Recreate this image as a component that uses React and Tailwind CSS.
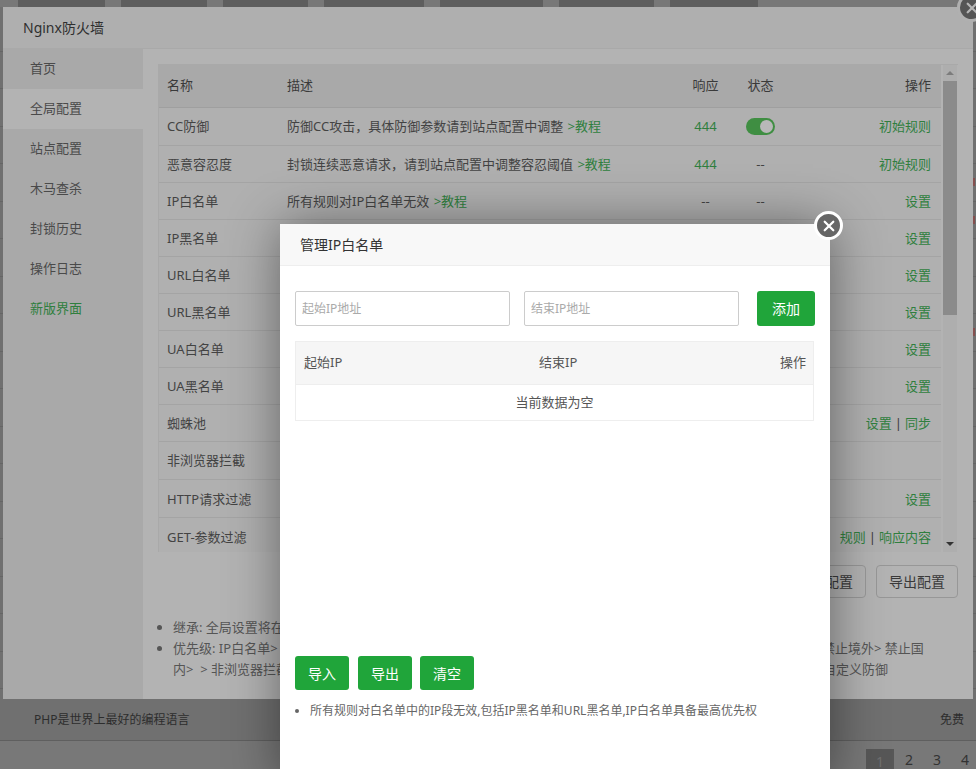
import React from "react";

const menu = ["首页", "全局配置", "站点配置", "木马查杀", "封锁历史", "操作日志", "新版界面"];

const rows = [
  { name: "CC防御", desc: "防御CC攻击，具体防御参数请到站点配置中调整", link: true, code: "444", toggle: true, ops: ["初始规则"], h: "h-[38px]" },
  { name: "恶意容忍度", desc: "封锁连续恶意请求，请到站点配置中调整容忍阈值", link: true, code: "444", state: "--", ops: ["初始规则"], h: "h-[37px] pt-[2px]" },
  { name: "IP白名单", desc: "所有规则对IP白名单无效", link: true, code: "--", state: "--", ops: ["设置"], h: "h-[37px] pt-[2px]" },
  { name: "IP黑名单", ops: ["设置"], h: "h-[37px] pt-[2px]" },
  { name: "URL白名单", ops: ["设置"], h: "h-[37px] pt-[2px]" },
  { name: "URL黑名单", ops: ["设置"], h: "h-[37px] pt-[2px]" },
  { name: "UA白名单", ops: ["设置"], h: "h-[37px] pt-[2px]" },
  { name: "UA黑名单", ops: ["设置"], h: "h-[37px] pt-[2px]" },
  { name: "蜘蛛池", ops: ["设置", "同步"], h: "h-[37px] pt-[2px]" },
  { name: "非浏览器拦截", ops: [], h: "h-[38px]" },
  { name: "HTTP请求过滤", ops: ["设置"], h: "h-[38px] pt-[2px]" },
  { name: "GET-参数过滤", ops: ["规则", "响应内容"], h: "h-[38px] pt-[2px]" },
];

const tabs = ["w-[87px]", "w-[86px]", "w-[85px]", "w-[100px]", "w-[103px]", "w-[95px]", "w-[88px]"];

const bgRows = Array.from({ length: 18 }, (_, i) => i);

const Row = ({ r }) => {
  return (
    <div className={`flex items-center border-b border-[#a4a4a4] bg-[#b0b0b0] text-[13px] text-[#434343] ${r.h}`}>
      <div className="w-[128px] shrink-0 pl-[8px]">{r.name}</div>
      <div className="w-[391px] shrink-0 whitespace-nowrap">
        {r.desc}
        {r.link && <span className="ml-[1px] text-[#2f7f3e]"> &gt;教程</span>}
      </div>
      <div className={`w-[55px] shrink-0 text-center ${r.code === "444" ? "text-[#2f7f3e]" : ""}`}>{r.code}</div>
      <div className="flex w-[55px] shrink-0 justify-center">
        {r.toggle ? (
          <div className="flex h-[17px] w-[29px] items-center justify-end rounded-full bg-[#3f8e42] pr-[2px]">
            <div className="h-[13px] w-[13px] rounded-full bg-[#b8b8b8]"></div>
          </div>
        ) : (
          r.state
        )}
      </div>
      <div className="flex-1 whitespace-nowrap pr-[10px] text-right text-[#2f7f3e]">
        {r.ops.map((op, i) => (
          <span key={op}>
            {i > 0 && <span className="mx-[3px] text-[#3a3a3a]">|</span>}
            {op}
          </span>
        ))}
      </div>
    </div>
  );
};

const GreenBtn = ({ children }) => (
  <button className="h-[34px] w-[54px] rounded-[3px] bg-[#20a53a] text-[14px] text-white">{children}</button>
);

export default function App() {
  return (
    <div className="relative h-[769px] w-[976px] overflow-hidden bg-[#707070] font-['Noto_Sans','Noto_Sans_CJK_SC',sans-serif]">
      {/* page behind the layers */}
      <div className="flex h-[7px] gap-[16px] bg-[#787878] pl-[18px]">
        {tabs.map((w, i) => (
          <div key={i} className={`h-full bg-[#5e5e5e] ${w}`}></div>
        ))}
      </div>
      <div className="h-[692px] overflow-hidden pt-[7px]">
        {bgRows.map((i) => (
          <div key={i} className="flex h-[37.5px] items-center justify-end border-b border-[#656565] pr-[1px]">
            {(i === 4 || i === 5 || i === 8) && <div className="h-[8px] w-[2px] bg-[#86504f]"></div>}
          </div>
        ))}
      </div>
      <div className="flex h-[42px] items-center justify-between border-b border-[#5f5f5f] bg-[#707070] pl-[34px] pr-[12px] text-[12px] text-[#2d2d2d]">
        <span>PHP是世界上最好的编程语言</span>
        <span>免费</span>
      </div>
      <div className="flex h-[28px] bg-[#787878] pl-[866px] pt-[8px] text-[14px] text-[#333]">
        <div className="flex h-[24px] w-[28px] shrink-0 items-center justify-center bg-[#575757] text-[#6f6f6f]">1</div>
        <div className="flex w-[30px] shrink-0 justify-center">2</div>
        <div className="flex w-[26px] shrink-0 justify-center">3</div>
        <div className="flex w-[30px] shrink-0 justify-center">4</div>
      </div>

      {/* firewall window */}
      <div className="absolute left-[3px] top-[7px] flex h-[692px] w-[970px] flex-col bg-[#b3b3b3]">
        <div className="flex h-[42px] shrink-0 items-center border-b border-[#a9a9a9] bg-[#afafaf] pl-[20px] text-[14px] text-[#2f2f2f]">
          Nginx防火墙
        </div>
        <div className="flex min-h-0 flex-1">
          <div className="w-[140px] shrink-0 bg-[#a9a9a9] text-[13px] text-[#4a4a4a]">
            {menu.map((m) => (
              <div
                key={m}
                className={`flex h-[40px] items-center pl-[27px] ${m === "全局配置" ? "bg-[#b3b3b3]" : ""} ${m === "新版界面" ? "text-[#2f7f3e]" : ""}`}
              >
                {m}
              </div>
            ))}
          </div>
          <div className="flex min-w-0 flex-1 flex-col pl-[15px] pr-[15px] pt-[15px]">
            <div className="flex h-[488px] shrink-0 overflow-hidden border-t border-[#a9a9a9]">
              <div className="w-[783px] shrink-0 border-l border-[#a9a9a9]">
                <div className="flex h-[43px] items-center border-b border-[#9f9f9f] bg-[#a9a9a9] text-[13px] text-[#3a3a3a]">
                  <div className="w-[128px] pl-[8px]">名称</div>
                  <div className="w-[391px]">描述</div>
                  <div className="w-[55px] text-center">响应</div>
                  <div className="w-[55px] text-center">状态</div>
                  <div className="flex-1 pr-[10px] text-right">操作</div>
                </div>
                {rows.map((r) => (
                  <Row key={r.name} r={r} />
                ))}
              </div>
              <div className="ml-[2px] flex w-[14px] shrink-0 flex-col items-center bg-[#aeaeae]">
                <div className="mt-[6px] h-0 w-0 border-x-[4px] border-b-[4px] border-x-transparent border-b-[#7c7c7c]"></div>
                <div className="mt-[6px] h-[234px] w-full bg-[#8b8b8b]"></div>
                <div className="mt-auto mb-[6px] h-0 w-0 border-x-[4px] border-t-[4px] border-x-transparent border-t-[#333]"></div>
              </div>
            </div>
            <div className="mt-[13px] flex justify-end gap-[10px] text-[14px] text-[#3a3a3a]">
              <button className="h-[33px] w-[82px] rounded-[4px] border border-[#979797]">导入配置</button>
              <button className="h-[33px] w-[82px] rounded-[4px] border border-[#979797]">导出配置</button>
            </div>
            <ul className="mt-[19px] list-disc pl-[15px] text-[13px] leading-[21px] text-[#555]">
              <li>继承: 全局设置将在站点配置中自动继承为默认值</li>
              <li>
                <span className="inline-block w-[649px]">优先级: IP白名单&gt;</span>
                禁止境外&gt; 禁止国
                <br />
                <span className="inline-block w-[650px]">内&gt;&nbsp; &gt; 非浏览器拦截</span>
                自定义防御
              </li>
            </ul>
          </div>
        </div>
      </div>
      <button className="absolute left-[957px] top-[-7px] flex h-[29px] w-[29px] items-center justify-center rounded-full border-[3px] border-[#b0b0b0] bg-[#555]">
        <svg width="12" height="12" viewBox="0 0 14 14" stroke="#b5b5b5" strokeWidth="2.6" strokeLinecap="round">
          <path d="M2 2l10 10M12 2L2 12" />
        </svg>
      </button>

      {/* IP whitelist dialog */}
      <div className="absolute left-[280px] top-[224px] h-[560px] w-[550px] bg-white shadow-[1px_1px_50px_rgba(0,0,0,0.45)]">
        <div className="flex h-[42px] items-center border-b border-[#eeeeee] bg-[#f8f8f8] pl-[20px] text-[14px] text-[#333]">
          管理IP白名单
        </div>
        <div className="px-[15px] pt-[25px]">
          <div className="flex items-center">
            <input
              placeholder="起始IP地址"
              className="h-[35px] w-[215px] rounded-[2px] border border-[#cccccc] px-[6px] text-[12px] outline-none placeholder:text-[#aaaaaa]"
            />
            <input
              placeholder="结束IP地址"
              className="ml-[14px] h-[35px] w-[215px] rounded-[2px] border border-[#cccccc] px-[6px] text-[12px] outline-none placeholder:text-[#aaaaaa]"
            />
            <button className="ml-[18px] h-[35px] w-[58px] rounded-[3px] bg-[#20a53a] text-[14px] text-white">添加</button>
          </div>
          <div className="mt-[15px] w-[519px] border border-[#eeeeee] text-[13px] text-[#555]">
            <div className="flex h-[43px] items-center border-b border-[#eeeeee] bg-[#f6f6f6] pl-[8px] pr-[7px]">
              <div className="w-[235px]">起始IP</div>
              <div className="flex-1">结束IP</div>
              <div>操作</div>
            </div>
            <div className="flex h-[35px] items-center justify-center">当前数据为空</div>
          </div>
          <div className="mt-[235px] flex gap-[9px]">
            <GreenBtn>导入</GreenBtn>
            <GreenBtn>导出</GreenBtn>
            <div className="-ml-[1px] flex">
              <GreenBtn>清空</GreenBtn>
            </div>
          </div>
          <ul className="mt-[12px] list-disc pl-[15px] text-[12px] leading-[18px] text-[#666]">
            <li>所有规则对白名单中的IP段无效,包括IP黑名单和URL黑名单,IP白名单具备最高优先权</li>
          </ul>
        </div>
      </div>
      <button className="absolute left-[814px] top-[211px] flex h-[29px] w-[29px] items-center justify-center rounded-full border-[3px] border-white bg-[#666]">
        <svg width="12" height="12" viewBox="0 0 14 14" stroke="#fff" strokeWidth="2.6" strokeLinecap="round">
          <path d="M2 2l10 10M12 2L2 12" />
        </svg>
      </button>
    </div>
  );
}
